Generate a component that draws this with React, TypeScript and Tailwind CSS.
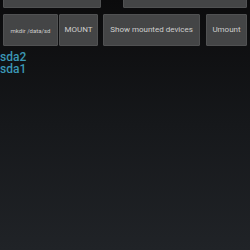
const Btn = ({ label, className }: { label: string; className: string }) => (
  <button
    className={`flex items-center justify-center bg-[#444546] border border-[#505152] rounded-[1px] text-[#cdcdcd] whitespace-nowrap ${className}`}
  >
    {label}
  </button>
);

const App = () => {
  return (
    <div
      className="w-[250px] h-[250px] overflow-hidden bg-gradient-to-b from-[#0b0b0c] via-[#16181b] to-[#202327]"
      style={{ fontFamily: "Roboto, 'Liberation Sans', sans-serif" }}
    >
      <div className="flex pl-[3px] -mt-[40px]">
        <Btn label="" className="w-[98px] h-[48px]" />
        <Btn label="" className="w-[124px] h-[48px] ml-[22px]" />
      </div>
      <div className="flex pl-[3px] mt-[6px] text-[8px]">
        <Btn label="mkdir /data/sd" className="w-[55px] h-[32px] text-[6px]" />
        <Btn label="MOUNT" className="w-[39px] h-[32px] ml-[1px]" />
        <Btn label="Show mounted devices" className="w-[97px] h-[32px] ml-[5px]" />
        <Btn label="Umount" className="w-[41px] h-[32px] ml-[6px]" />
      </div>
      <div className="mt-[5px] text-[12px] font-medium leading-[12px] text-[#3b97b4]">
        <p>sda2</p>
        <p>sda1</p>
      </div>
    </div>
  );
};

export default App;
